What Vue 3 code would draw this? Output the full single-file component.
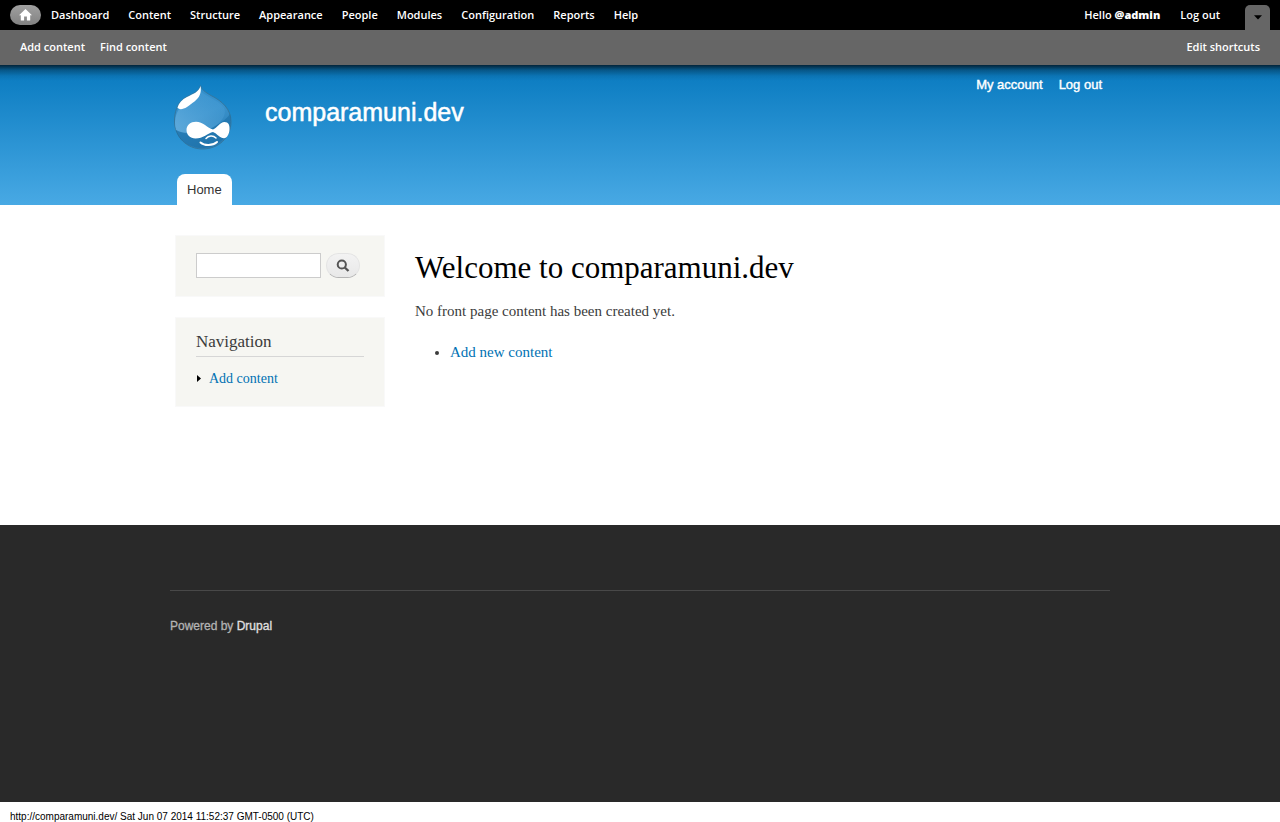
<script setup>
import { ref } from 'vue'

const menu = ['Dashboard', 'Content', 'Structure', 'Appearance', 'People', 'Modules', 'Configuration', 'Reports', 'Help']
const query = ref('')
const drawerOpen = ref(true)
</script>

<template>
  <div class="page">
    <div class="admin">
      <nav class="toolbar" aria-label="Administration">
        <a class="home" href="#" aria-label="Home">
          <svg width="13" height="12" viewBox="0 0 13 12" aria-hidden="true">
            <path d="M6.5 0 13 6.3h-1.8V11.5H7.9V7.6H5.1v3.9H1.8V6.3H0z" fill="#fff" />
          </svg>
        </a>
        <ul class="menu">
          <li v-for="item in menu" :key="item"><a href="#">{{ item }}</a></li>
        </ul>
        <ul class="menu user">
          <li><a href="#">Hello <strong>@admin</strong></a></li>
          <li><a href="#">Log out</a></li>
        </ul>
        <button class="toggle" type="button" aria-label="Toggle shortcuts" @click="drawerOpen = !drawerOpen">
          <svg width="8" height="5" viewBox="0 0 8 5" aria-hidden="true"><path d="M0 0.3h8L4 4.6z" fill="#000" /></svg>
        </button>
      </nav>
      <div v-if="drawerOpen" class="drawer">
        <a href="#">Add content</a>
        <a href="#">Find content</a>
        <a class="edit" href="#">Edit shortcuts</a>
      </div>
    </div>

    <header class="header">
      <div class="section header-grid">
        <a class="logo" href="#" aria-label="comparamuni.dev home">
          <svg width="60" height="67" viewBox="0 0 60 67" aria-hidden="true">
            <defs>
              <linearGradient id="drop" x1="0.2" y1="0" x2="0.6" y2="1">
                <stop offset="0" stop-color="#2f8dcb" />
                <stop offset="0.5" stop-color="#3a92cc" />
                <stop offset="1" stop-color="#2a7db5" />
              </linearGradient>
              <linearGradient id="sheen" x1="0" y1="0.8" x2="0.9" y2="0.2">
                <stop offset="0" stop-color="#6bb2e0" stop-opacity="0.7" />
                <stop offset="1" stop-color="#4ba0d8" stop-opacity="0.3" />
              </linearGradient>
            </defs>
            <path d="M27.500 0.500C28.500 4.500 32 7 38 10.500 49 16 58 24 58 36.500 58 53 45 64 29.500 64S1.500 52 1.500 36C1.500 28 3.500 19 11 13.500 17 9 26 8 27.500 0.500z" fill="url(#drop)" stroke="#34779f" stroke-width="1" />
            <path d="M28 6C31 11 48 16 51.500 24 54 32 45 41 35 45 24 49 10 50 3 45 0 34 4 22 14 17 20 14 26 12 28 6z" fill="url(#sheen)" />
            <path d="M57 29C61 47 48 62 30 63 16 63 5 55 3 45 12 50 28 49 37 44 46 39 54 34 57 29z" fill="#1669a2" opacity="0.5" />
            <path d="M27.500 1C29 8 26 13 21.500 16.500 18 18.500 17.500 20 14 22 10 24.500 6 25 4.500 22.500 6 18 9 14.500 14 12 20 9 26 7 27.500 1z" fill="#fff" />
            <path d="M23 36.700C30 36.700 34.500 43 40 44.500 44 43 47 37 51.500 37 55.500 37 56.800 40 56.500 44.500 56.300 49 54 53.300 51 53.300 47 53.300 44 48.500 40 47 35 48 30 53.500 22.500 53.500 17 53.500 13.500 49.500 13.500 45 13.500 40 17.500 36.700 23 36.700z" fill="#fff" />
            <path d="M33 53.500c2.500-3 7-3.500 10-0.500" fill="none" stroke="#fff" stroke-width="1.500" stroke-linecap="round" />
            <path d="M27.500 57.500c4 3.500 12 3.500 16.500-0.500" fill="none" stroke="#fff" stroke-width="2" stroke-linecap="round" />
          </svg>
        </a>
        <a class="site-name" href="#">comparamuni.dev</a>
        <nav class="account" aria-label="Account">
          <a href="#">My account</a>
          <a href="#">Log out</a>
        </nav>
        <nav class="tabs" aria-label="Main menu"><a href="#">Home</a></nav>
      </div>
    </header>

    <div class="section columns">
      <aside class="sidebar">
        <form class="block search" role="search" @submit.prevent>
          <input v-model="query" type="text" aria-label="Search" />
          <button type="submit" aria-label="Search">
            <svg width="14" height="14" viewBox="0 0 14 14" aria-hidden="true">
              <circle cx="5.800" cy="5.500" r="4.100" fill="none" stroke="#555" stroke-width="2" />
              <path d="M8.800 8.500 12.500 12" stroke="#555" stroke-width="2.400" />
            </svg>
          </button>
        </form>
        <nav class="block navigation" aria-labelledby="nav-title">
          <h2 id="nav-title">Navigation</h2>
          <a href="#">
            <svg width="5" height="7" viewBox="0 0 5 7" aria-hidden="true"><path d="M1 0v7L5 3.500z" fill="#000" /></svg>
            Add content
          </a>
        </nav>
      </aside>
      <main class="content">
        <h1>Welcome to comparamuni.dev</h1>
        <p>No front page content has been created yet.</p>
        <ul><li><a href="#">Add new content</a></li></ul>
      </main>
    </div>

    <footer class="footer">
      <div class="section">
        <p>Powered by <a href="#">Drupal</a></p>
      </div>
    </footer>
    <div class="stamp">http://comparamuni.dev/ Sat Jun 07 2014 11:52:37 GMT-0500 (UTC)</div>
  </div>
</template>

<style>
body {
  margin: 0;
  background: #fff;
}
</style>

<style scoped>
.page {
  display: flex;
  flex-direction: column;
  min-height: 100vh;
  overflow: hidden;
  color: #3b3b3b;
  font: 15px/22px "Liberation Serif", serif;
}
a {
  color: #0071b3;
  text-decoration: none;
}
ul {
  list-style: none;
  margin: 0;
  padding: 0;
}
.section {
  width: 100%;
  max-width: 940px;
  margin: 0 auto;
  box-sizing: border-box;
}
.admin {
  font: 600 11px/20px "Open Sans", sans-serif;
}
.admin a {
  color: #fff;
}
.toolbar {
  display: flex;
  align-items: center;
  height: 30px;
  padding: 0 10px;
  background: #000;
}
.home {
  display: flex;
  align-items: center;
  justify-content: center;
  width: 31px;
  height: 20px;
  border-radius: 10px;
  background: linear-gradient(#a0a0a0, #828282);
}
.menu {
  display: flex;
  gap: 19px;
  margin-left: 10px;
}
.user {
  gap: 20px;
  margin-left: auto;
}
.toggle {
  align-self: flex-end;
  width: 25px;
  height: 25px;
  margin-left: 25px;
  padding: 0;
  border: 0;
  border-radius: 5px 5px 0 0;
  background: #666;
}
.toggle svg {
  display: block;
  margin: 0 auto;
}
.drawer {
  display: flex;
  align-items: center;
  gap: 15px;
  box-sizing: border-box;
  height: 35px;
  padding: 0 20px 2px;
  background: #666;
}
.edit {
  margin-left: auto;
}
.header {
  background:
    linear-gradient(rgba(0, 0, 0, 0.7), rgba(0, 0, 0, 0.3) 5px, rgba(0, 0, 0, 0.07) 11px, transparent 16px),
    linear-gradient(#0779bf, #48a9e4);
  font-family: "Liberation Sans", Arial, sans-serif;
}
.header a {
  color: #fff;
}
.header-grid {
  display: grid;
  grid-template-columns: 95px 1fr auto;
  grid-template-rows: 109px 31px;
}
.logo {
  padding: 20px 0 0 3px;
}
.logo svg {
  display: block;
}
.site-name {
  padding-top: 32px;
  font-size: 25px;
  line-height: 30px;
  -webkit-text-stroke: 0.5px #fff;
}
.account {
  display: flex;
  gap: 16px;
  padding: 10px 8px 0 0;
  font-size: 13px;
  line-height: 20px;
  -webkit-text-stroke: 0.4px #fff;
}
.tabs {
  grid-column: 1 / -1;
  padding-left: 7px;
}
.header .tabs a {
  display: inline-block;
  padding: 0 10px;
  border-radius: 8px 8px 0 0;
  background: #fff;
  color: #333;
  font-size: 13px;
  line-height: 31px;
}
.columns {
  display: flex;
  gap: 30px;
  min-height: 320px;
  padding: 30px 5px;
}
.sidebar {
  flex: 0 0 210px;
  display: flex;
  flex-direction: column;
  gap: 20px;
}
.block {
  padding: 0 20px;
  border: 1px solid #f9f9f9;
  background: #f6f6f2;
}
.search {
  display: flex;
  gap: 5px;
  padding: 17px 20px 18px;
}
.search input {
  box-sizing: border-box;
  width: 125px;
  height: 25px;
  padding: 4px;
  border: 1px solid #ccc;
  background: #fff;
  font: 13px "Liberation Serif", serif;
}
.search button {
  display: flex;
  align-items: center;
  justify-content: center;
  box-sizing: border-box;
  width: 34px;
  height: 25px;
  padding: 0;
  border: 1px solid #e4e4e4;
  border-bottom-color: #b4b4b4;
  border-radius: 13px;
  background: linear-gradient(#f3f3f3, #e8e8e8);
}
.navigation {
  padding: 13px 20px 17px;
}
.navigation h2 {
  margin: 0 0 11px;
  padding-bottom: 3px;
  border-bottom: 1px solid #d6d6d6;
  font-size: 17px;
  line-height: 22px;
  font-weight: 400;
}
.navigation a {
  display: flex;
  align-items: center;
  gap: 8px;
  font-size: 14px;
  line-height: 21px;
}
.content {
  flex: 1;
  padding-top: 16px;
}
h1 {
  margin: 0;
  color: #000;
  font-size: 31px;
  line-height: 34px;
  font-weight: 400;
}
.content p {
  margin: 15px 0 19px;
}
.content ul {
  padding-left: 35px;
  list-style: disc;
}
.footer {
  flex: 1;
  padding-top: 65px;
  background: #292929;
  color: #b3b3b3;
  font: 12px/20px "Liberation Sans", Arial, sans-serif;
}
.footer p {
  margin: 0;
  padding-top: 25px;
  border-top: 1px solid #484848;
  -webkit-text-stroke: 0.3px currentColor;
}
.footer a {
  color: #e0e0e0;
}
.stamp {
  height: 20px;
  padding: 0 10px;
  color: #000;
  font: 10px/29px "Liberation Sans", Arial, sans-serif;
}
</style>
